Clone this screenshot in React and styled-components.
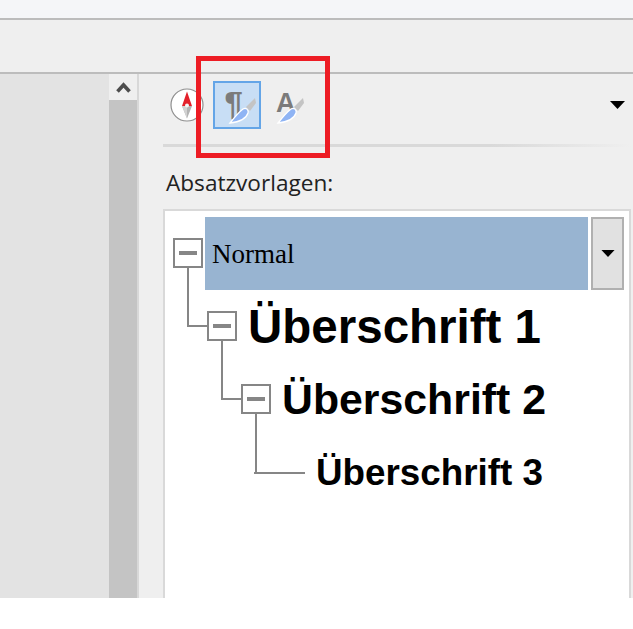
import React from "react";
import styled, { createGlobalStyle } from "styled-components";

const GlobalStyle = createGlobalStyle`
  html, body { margin: 0; padding: 0; background: #fff; }
  #root { width: 633px; height: 629px; overflow: hidden; }
`;

function CompassIcon() {
  return (
    <svg width="34" height="34" viewBox="0 0 34 34">
      <circle cx="17" cy="17" r="16" fill="#fff" stroke="#8f8f8f" strokeWidth="1.2" />
      <path d="M17 3.5 L22 18 L12 18 Z" fill="#e3202a" />
      <path d="M17 30.5 L22 18 L12 18 Z" fill="#b4b4b4" />
      <path d="M17 30.5 L17 18 L12 18 Z" fill="#d2d2d2" />
      <circle cx="17" cy="17.5" r="2" fill="#f4f4f4" />
    </svg>
  );
}

function Brush() {
  return (
    <>
      <path d="M31 24 L40 15 L41 20 L35 28 Z" fill="#c4c4c4" />
      <path d="M15 40 C19 35 24 29 28 26 C31 24 34 27 33 30 C31 36 24 39 15 40 Z" fill="#8fb4f4" stroke="#fff" strokeWidth="1.3" />
    </>
  );
}

function ParagraphIcon() {
  return (
    <svg width="44" height="44" viewBox="0 0 44 44">
      <text x="9.5" y="32" fontFamily="Liberation Sans" fontWeight="700" fontSize="33" fill="#7b7b7b">¶</text>
      <Brush />
    </svg>
  );
}

function LetterIcon() {
  return (
    <svg width="44" height="44" viewBox="0 0 44 44">
      <text x="13" y="29" fontFamily="Liberation Sans" fontWeight="700" fontSize="27" fill="#7b7b7b">A</text>
      <Brush />
    </svg>
  );
}

function Caret({ width = 15, height = 8 }) {
  return (
    <svg width={width} height={height} viewBox="0 0 15 8">
      <path d="M0 0 H15 L7.5 8 Z" fill="#000" />
    </svg>
  );
}

export default function App() {
  const rows = [
    { level: 0, size: 27, text: "Normal", selected: true, box: true },
    { level: 1, size: 47.5, text: "Überschrift 1", box: true },
    { level: 2, size: 42.8, text: "Überschrift 2", box: true },
    { level: 3, size: 36.8, text: "Überschrift 3" },
  ];

  return (
    <Page>
      <GlobalStyle />
      <TopStrip />
      <Ribbon />
      <Workspace>
        <LeftPane />
        <ScrollBar>
          <ScrollButton>
            <svg width="15" height="11" viewBox="0 0 15 11">
              <path d="M1.5 9.5 L7.5 3 L13.5 9.5" fill="none" stroke="#4d4d4d" strokeWidth="3.6" />
            </svg>
          </ScrollButton>
        </ScrollBar>
        <SidePanel>
          <ToolRow>
            <CompassCell>
              <CompassIcon />
            </CompassCell>
            <ToolButton $active>
              <ParagraphIcon />
            </ToolButton>
            <ToolButton>
              <LetterIcon />
            </ToolButton>
            <MenuCaret>
              <Caret />
            </MenuCaret>
          </ToolRow>
          <Divider />
          <PanelLabel>Absatzvorlagen:</PanelLabel>
          <StyleList>
            {rows.map((row) => (
              <TreeRow key={row.text} $level={row.level}>
                {row.box ? (
                  <Toggle $root={row.level === 0}>
                    <ToggleBar />
                  </Toggle>
                ) : (
                  <LeafLine />
                )}
                <RowLabel $selected={row.selected} $size={row.size}>
                  {row.text}
                </RowLabel>
                {row.selected && (
                  <RowMenu>
                    <Caret width={14} height={7} />
                  </RowMenu>
                )}
              </TreeRow>
            ))}
          </StyleList>
        </SidePanel>
      </Workspace>
      <Highlight />
    </Page>
  );
}

const Page = styled.div`
  position: relative;
  width: 633px;
  height: 629px;
  background: #fff;
  overflow: hidden;
`;

const TopStrip = styled.div`
  height: 18px;
  background: #f5f6f8;
  border-bottom: 2px solid #bcbcbc;
`;

const Ribbon = styled.div`
  height: 52px;
  background: #efefef;
  border-bottom: 2px solid #bcbcbc;
`;

const Workspace = styled.div`
  display: flex;
  height: 524px;
  overflow: hidden;
`;

const LeftPane = styled.div`
  width: 109px;
  background: #e3e3e3;
`;

const ScrollBar = styled.div`
  width: 28px;
  background: #c4c4c4;
`;

const ScrollButton = styled.div`
  height: 26px;
  background: #efefef;
  display: flex;
  align-items: center;
  justify-content: center;
`;

const SidePanel = styled.div`
  flex: 1;
  min-width: 0;
  background: #efefef;
  border-left: 2px solid #d8d8d8;
  padding: 7px 2px 0 24px;
`;

const ToolRow = styled.div`
  display: flex;
  align-items: center;
  height: 48px;
`;

const CompassCell = styled.div`
  width: 50px;
  padding-left: 7px;
  box-sizing: border-box;
  display: flex;
`;

const ToolButton = styled.div`
  width: 48px;
  height: 48px;
  box-sizing: border-box;
  display: flex;
  align-items: center;
  justify-content: center;
  background: ${(p) => (p.$active ? "#c8def5" : "transparent")};
  border: 2px solid ${(p) => (p.$active ? "#64a5e7" : "transparent")};
`;

const MenuCaret = styled.div`
  margin-left: auto;
  margin-right: 6px;
  display: flex;
`;

const Divider = styled.div`
  height: 3px;
  margin-top: 15px;
  background: linear-gradient(to right, #d9d9d9, #d9d9d9 70%, #efefef);
`;

const PanelLabel = styled.div`
  margin: 24px 0 14px 3px;
  font: 400 22.6px/24px "Open Sans", sans-serif;
  color: #222;
`;

const StyleList = styled.div`
  height: 420px;
  box-sizing: border-box;
  background: #fff;
  border: 2px solid #d9d9d9;
  padding-top: 6px;
`;

const TreeRow = styled.div`
  display: flex;
  align-items: center;
  height: 73px;
  padding-left: ${(p) => 8 + p.$level * 34}px;
`;

const Toggle = styled.div`
  position: relative;
  width: 30px;
  height: 30px;
  margin-bottom: 1px;
  box-sizing: border-box;
  flex: none;
  border: 2px solid #868686;
  background: #fff;
  display: flex;
  align-items: center;
  justify-content: center;

  &::before {
    content: "";
    display: ${(p) => (p.$root ? "none" : "block")};
    position: absolute;
    left: -21px;
    top: 12px;
    width: 19px;
    height: 2px;
    background: #868686;
  }

  &::after {
    content: "";
    position: absolute;
    left: 12px;
    top: 28px;
    width: 2px;
    height: 59px;
    background: #868686;
  }
`;

const ToggleBar = styled.div`
  width: 18px;
  height: 4px;
  background: #868686;
`;

const LeafLine = styled.div`
  width: 51px;
  height: 2px;
  flex: none;
  margin-left: -21px;
  background: #868686;
`;

const RowLabel = styled.div`
  margin-left: ${(p) => (p.$selected ? "2px" : "11px")};
  height: 100%;
  display: flex;
  align-items: center;
  color: #000;
  white-space: nowrap;
  font-family: ${(p) => (p.$selected ? '"Liberation Serif", serif' : '"Liberation Sans", sans-serif')};
  font-weight: ${(p) => (p.$selected ? 400 : 700)};
  font-size: ${(p) => p.$size}px;
  ${(p) => p.$selected && "width: 383px; box-sizing: border-box; padding: 2px 0 0 7px; background: #98b4d1;"}
`;

const RowMenu = styled.div`
  width: 33px;
  height: 73px;
  box-sizing: border-box;
  margin-left: 3px;
  flex: none;
  background: #e1e1e1;
  border: 2px solid #b0b0b0;
  display: flex;
  align-items: center;
  justify-content: center;
`;

const Highlight = styled.div`
  position: absolute;
  left: 196px;
  top: 56px;
  width: 134px;
  height: 102px;
  box-sizing: border-box;
  border: 5px solid #ed1c24;
  pointer-events: none;
`;
